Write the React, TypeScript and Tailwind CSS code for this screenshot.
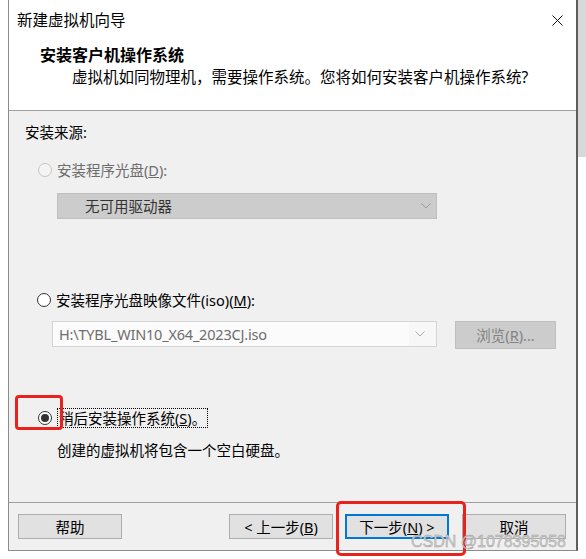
import React from 'react';

const font = "font-['Noto_Sans','Noto_Sans_CJK_SC',sans-serif]";

function Radio({ state }: { state: 'disabled' | 'off' | 'on' }) {
  if (state === 'disabled') {
    return <span className="w-[14px] h-[14px] rounded-full border border-[#c4c4c4] bg-[#f4f4f4] shrink-0" />;
  }
  return (
    <span className="w-[14px] h-[14px] rounded-full border border-[#333333] bg-white shrink-0 flex items-center justify-center">
      {state === 'on' && <span className="w-[8px] h-[8px] rounded-full bg-[#333333]" />}
    </span>
  );
}

function Chevron({ color = '#8a8a8a' }: { color?: string }) {
  return (
    <svg width="10" height="6" viewBox="0 0 10 6" fill="none">
      <path d="M0.5 0.5L5 5L9.5 0.5" stroke={color} strokeWidth="1" />
    </svg>
  );
}

function Button({ children, focused = false }: { children: React.ReactNode; focused?: boolean }) {
  return (
    <div
      className={`w-[104px] h-[25px] flex items-center justify-center bg-[#e1e1e1] text-black ${
        focused ? 'border-2 border-[#0078d7]' : 'border border-[#adadad]'
      }`}
    >
      {children}
    </div>
  );
}

export default function App() {
  return (
    <div className={`relative w-[586px] h-[559px] bg-white overflow-hidden text-[14.5px] leading-[20px] text-black ${font}`}>
      <div className="flex">
        <div className="w-[8px]" />

        {/* Dialog window */}
        <div className="w-[570px] h-[551px] flex flex-col border-l border-b border-r-2 border-l-[#8c8c8c] border-b-[#8c8c8c] border-r-[#5e5e5e]">
          {/* Header */}
          <div className="h-[111px] bg-white border-b border-[#a0a0a0] shrink-0 text-[15.5px]">
            <div className="h-[40px] flex items-center justify-between pl-[8px] pr-[13px]">
              <span>新建虚拟机向导</span>
              <svg width="11" height="11" viewBox="0 0 11 11" fill="none">
                <path d="M0.5 0.5L10.5 10.5M10.5 0.5L0.5 10.5" stroke="#111" strokeWidth="1" />
              </svg>
            </div>
            <div className="pl-[31px] mt-[5px] font-bold text-[16px]">安装客户机操作系统</div>
            <div className="pl-[63px] mt-[2px]">虚拟机如同物理机，需要操作系统。您将如何安装客户机操作系统?</div>
          </div>

          {/* Body */}
          <div className="flex-1 bg-[#f0f0f0] pt-[11px] pl-[16px]">
            <div>安装来源:</div>

            <div className="mt-[18px] flex items-center gap-[5px] pl-[13px]">
              <Radio state="disabled" />
              <span className="text-[#6d6d6d]">
                安装程序光盘(<span className="underline">D</span>):
              </span>
            </div>

            <div className="mt-[13px] ml-[32px] w-[380px] h-[26px] bg-[#cccccc] border border-[#bfbfbf] flex items-center justify-between pl-[27px] pr-[5px] text-[#333333]">
              <span>无可用驱动器</span>
              <Chevron color="#9a9a9a" />
            </div>

            <div className="mt-[71px] flex items-center gap-[5px] pl-[12px]">
              <Radio state="off" />
              <span>
                安装程序光盘映像文件(iso)(<span className="underline">M</span>):
              </span>
            </div>

            <div className="mt-[11px] flex items-start h-[28px]">
              <div className="ml-[27px] w-[385px] h-[26px] bg-[#f7f7f7] border border-[#d4d4d4] flex items-center pr-[5px]">
                <div className="flex-1 h-full bg-[#fbfbfb] flex items-center pl-[6px] text-[#6d6d6d] tracking-[-0.2px]">
                  H:\TYBL_WIN10_X64_2023CJ.iso
                </div>
                <div className="w-[22px] flex justify-center">
                  <Chevron color="#a8a8a8" />
                </div>
              </div>
              <div className="ml-[18px] w-[101px] h-[28px] bg-[#cccccc] border border-[#bfbfbf] flex items-center justify-center text-[#838383]">
                浏览(<span className="underline">R</span>)...
              </div>
            </div>

            <div className="mt-[59px] flex items-center gap-[5px] pl-[13px]">
              <Radio state="on" />
              <span className="border border-dotted border-black px-[1px] leading-[18px]">
                稍后安装操作系统(<span className="underline">S</span>)。
              </span>
            </div>

            <div className="mt-[12px] pl-[32px]">创建的虚拟机将包含一个空白硬盘。</div>
          </div>

          {/* Footer */}
          <div className="h-[48px] shrink-0 bg-[#f0f0f0] border-t border-[#a0a0a0] pt-[11px] pl-[9px] flex">
            <Button>帮助</Button>
            <div className="ml-[107px]">
              <Button>
                &lt; 上一步(<span className="underline">B</span>)
              </Button>
            </div>
            <div className="ml-[12px]">
              <Button focused>
                下一步(<span className="underline">N</span>) &gt;
              </Button>
            </div>
            <div className="ml-[13px]">
              <Button>取消</Button>
            </div>
          </div>
        </div>

        {/* Window behind, partly visible */}
        <div className="w-[8px]">
          <div className="h-[157px] bg-[#d9d9d9]" />
        </div>
      </div>

      {/* Annotations */}
      <div className="absolute left-[15px] top-[395px] w-[48px] h-[35px] border-[3px] border-[#e8231e] rounded-[4px]" />
      <div className="absolute left-[336px] top-[501px] w-[130px] h-[55px] border-[3px] border-[#e8231e] rounded-[5px]" />
      <div className="absolute left-[411px] top-[532px] text-[16px] leading-[20px] font-['Liberation_Sans',Arial,sans-serif] text-[#cfcfcf] [-webkit-text-stroke:0.4px_#9a9a9a]">
        CSDN @1078395058
      </div>
    </div>
  );
}
